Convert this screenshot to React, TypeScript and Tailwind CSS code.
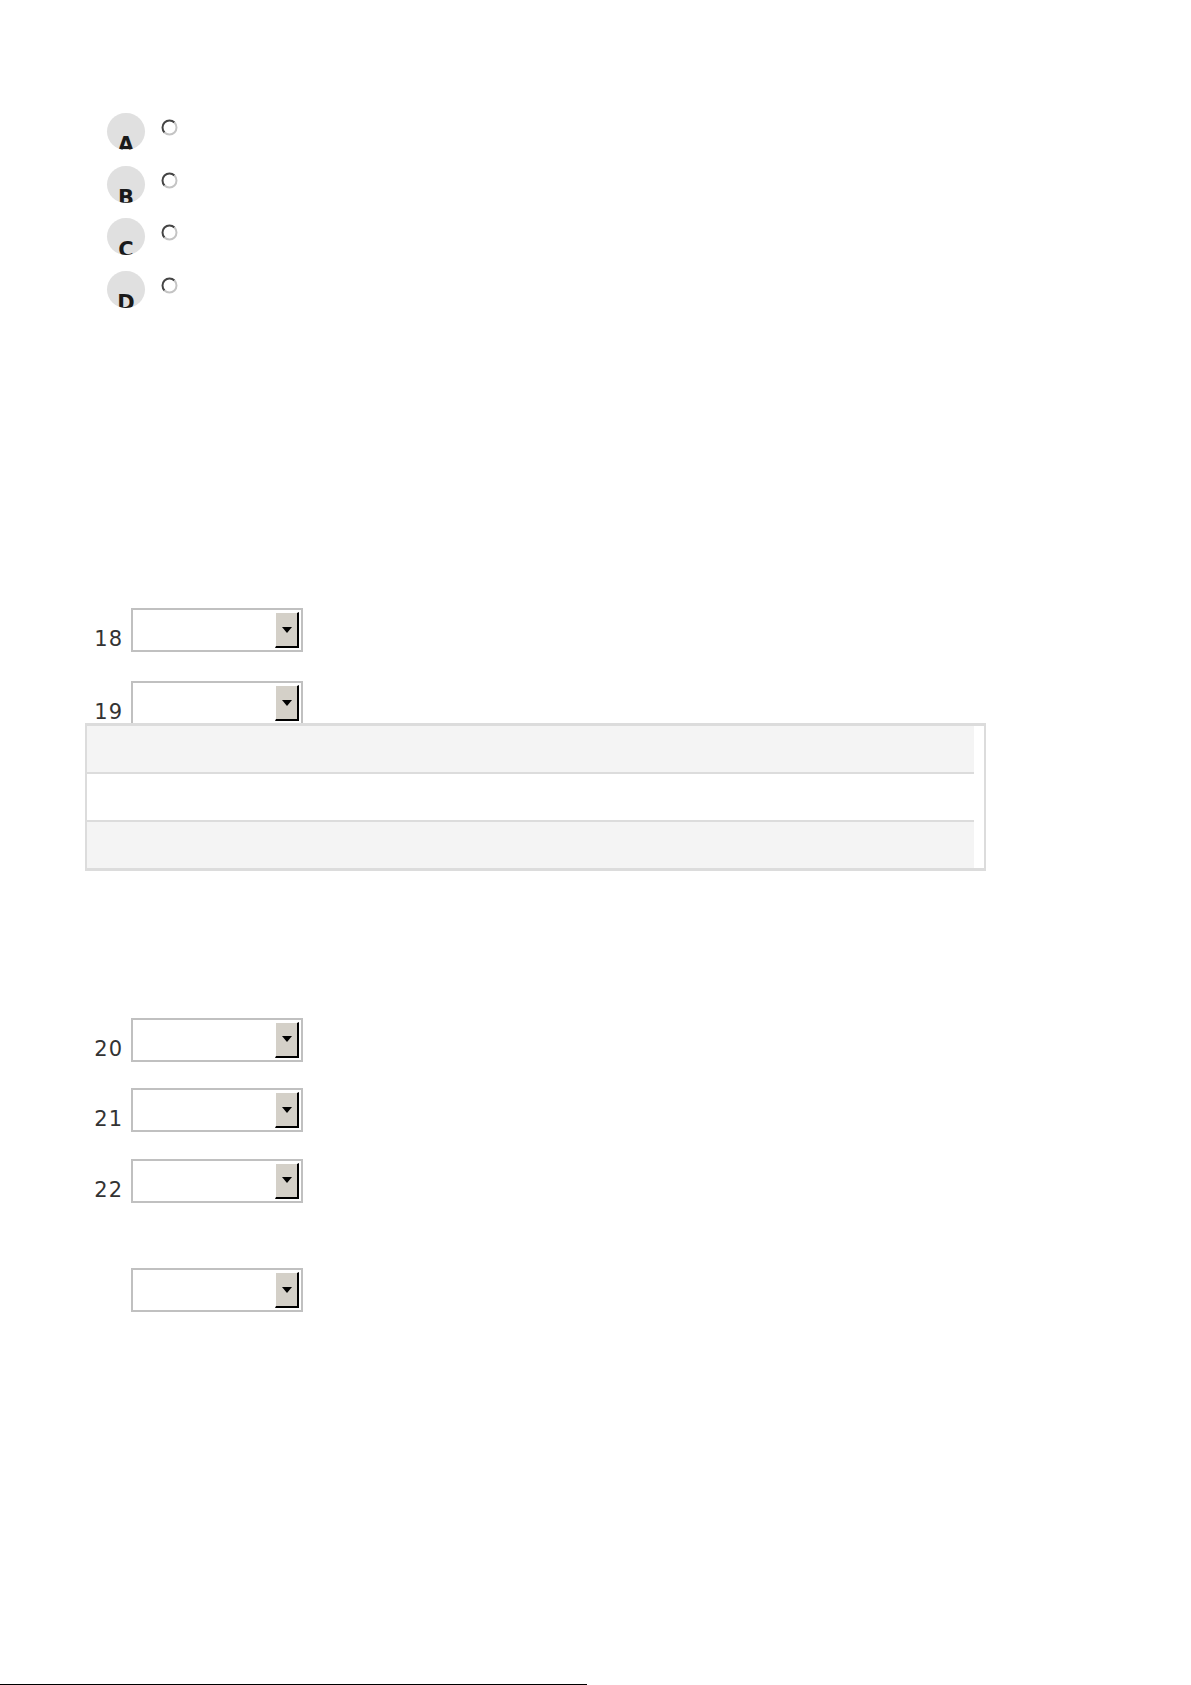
import React from 'react';

const options = ['A', 'B', 'C', 'D'];

function Radio() {
    return (
        <svg width="17" height="17" viewBox="0 0 17 17" className="block">
            <circle cx="8.5" cy="8.5" r="7" fill="#ffffff" />
            <path d="M13.45 3.55 A7 7 0 0 0 3.55 13.45" stroke="#444444" strokeWidth="2" fill="none" />
            <path d="M3.55 13.45 A7 7 0 0 0 13.45 3.55" stroke="#c4c4c4" strokeWidth="2" fill="none" />
        </svg>
    );
}

function Dropdown() {
    return (
        <div className="w-[172px] h-[44px] border-2 border-[#c0c0c0] bg-white flex justify-end p-[2px] shrink-0">
            <div className="w-[24px] h-full bg-[#d4d0c8] border-l border-t border-white border-r-2 border-b-2 border-r-black border-b-black flex items-center justify-center">
                <svg width="10" height="6" viewBox="0 0 10 6" className="block">
                    <path d="M0 0 H10 L5 6 Z" fill="#000000" />
                </svg>
            </div>
        </div>
    );
}

function SelectRow({ label, className = '' }: { label?: string; className?: string }) {
    return (
        <div className={`flex items-end ${className}`}>
            <div className="w-[123px] text-right mb-[2px] text-[21px] tracking-[1px] leading-none text-[#333333]">
                {label ?? ''}
            </div>
            <div className="ml-[8px]">
                <Dropdown />
            </div>
        </div>
    );
}

export default function App() {
    return (
        <div className="h-[1685px] overflow-hidden bg-white font-['DejaVu_Sans',sans-serif] flex flex-col">
            {/* answer choices */}
            <div className="pt-[113px] pl-[107px] flex flex-col">
                {options.map((o) => (
                    <div key={o} className="h-[52.5px] flex items-start">
                        <div className="w-[38px] h-[37px] rounded-full bg-[#e0e0e0] overflow-hidden flex justify-center">
                            <span className="pt-[22px] text-[21px] font-bold leading-none text-[#1a1a1a]">{o}</span>
                        </div>
                        <div className="ml-[16px] mt-[6px]">
                            <Radio />
                        </div>
                    </div>
                ))}
            </div>

            <SelectRow label="18" className="mt-[285px]" />
            <SelectRow label="19" className="mt-[29px]" />

            {/* table */}
            <div className="relative mt-[-2px] ml-[85px] w-[901px] border-x-2 border-t-[3px] border-b-[3px] border-[#dcdcdc] bg-white">
                <div className="mr-[10px] h-[46px] bg-[#f4f4f4]" />
                <div className="mr-[10px] h-[2px] bg-[#dcdcdc]" />
                <div className="mr-[10px] h-[46px] bg-white" />
                <div className="mr-[10px] h-[2px] bg-[#dcdcdc]" />
                <div className="mr-[10px] h-[46px] bg-[#f4f4f4]" />
            </div>

            <SelectRow label="20" className="mt-[146.5px]" />
            <SelectRow label="21" className="mt-[26.5px]" />
            <SelectRow label="22" className="mt-[26.5px]" />
            <SelectRow className="mt-[65.5px]" />

            <div className="mt-[372px] w-[587px] h-[1px] bg-black shrink-0" />
        </div>
    );
}
